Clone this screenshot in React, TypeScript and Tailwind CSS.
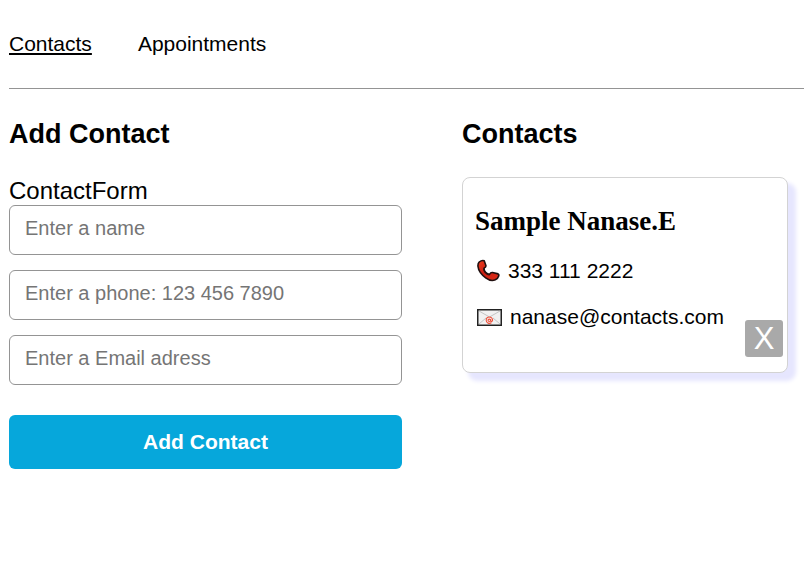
const inputs = ["Enter a name", "Enter a phone: 123 456 7890", "Enter a Email adress"];

function Phone() {
  return (
    <svg className="h-6 w-6 shrink-0" viewBox="0 0 24 24">
      <defs>
        <linearGradient id="handset" x1="0" y1="0" x2="1" y2="1">
          <stop offset="0" stopColor="#ee3d1e" />
          <stop offset=".45" stopColor="#c91e12" />
          <stop offset="1" stopColor="#e02e18" />
        </linearGradient>
      </defs>
      <path
        d="M3.200 3C4.700 1.800 6.800 1.200 8.200 1.800L9.900 6.600c.2 1.200-.4 1.900-1.700 2.400-.4 1.500.2 3 1.400 4.200 1.200 1.300 2.500 2 3.900 2.100.8-1.400 1.700-2 3-1.800l5.600 1.400c.8.300.9 1 .6 2-.5 1.700-1.700 3.100-3.400 3.900-2.800 1.200-6.400.5-9.600-1.900C5.900 16 2.400 11.800 2 7.500 1.800 5.700 2.200 4 3.200 3Z"
        fill="url(#handset)"
        stroke="#201010"
        strokeWidth="1.600"
        strokeLinejoin="round"
      />
      <path d="M7.800 9.500c-.2 3.500 2.300 6.300 5.800 6.600" fill="none" stroke="#201010" strokeWidth="1" />
    </svg>
  );
}

function Mail() {
  return (
    <svg className="h-[17px] w-[25px] shrink-0" viewBox="0 0 25 17">
      <rect x=".75" y=".75" width="23.500" height="15.500" fill="#f1f1f1" stroke="#222" strokeWidth="1.500" />
      <path d="M2 2l10.500 6L23 2M2 15l7-6M23 15l-7-6" fill="none" stroke="#c4c4c4" />
      <ellipse cx="12.300" cy="11.300" rx="1.300" ry="1.200" fill="none" stroke="#ee513b" strokeWidth="1.100" />
      <path d="M13.700 9.900v2c.2 1.200 1.900.8 1.900-.8 0-4.100-6.400-4.100-6.400.1 0 3.200 3.200 3.700 5.200 2.600" fill="none" stroke="#ee513b" strokeWidth="1.100" />
    </svg>
  );
}

export default function App() {
  return (
    <div className="h-[563px] overflow-hidden bg-white pl-[9px] font-['Liberation_Sans',Arial,sans-serif] text-black">
      <nav className="flex h-[89px] gap-[46px] border-b border-[#949494] pt-8 text-[21px] leading-6">
        <a className="underline decoration-2 underline-offset-2">Contacts</a>
        <a>Appointments</a>
      </nav>
      <main className="flex gap-[60px] pt-[29px]">
        <section className="w-[393px]">
          <h2 className="text-[27px] leading-8 font-bold">Add Contact</h2>
          <form className="pt-[27px]">
            <p className="h-7 text-[24px] leading-7">ContactForm</p>
            <div className="flex flex-col gap-[15px]">
              {inputs.map((label) => (
                <input
                  key={label}
                  placeholder={label}
                  className="h-[50px] w-full rounded-[6px] border border-[#949494] px-[15px] pb-[4px] text-[20px] placeholder:text-[#757575]"
                />
              ))}
            </div>
            <button className="mt-[30px] h-[54px] w-full rounded-[6px] bg-[#06a7db] text-[21px] font-bold text-white">
              Add Contact
            </button>
          </form>
        </section>
        <section className="w-[326px]">
          <h2 className="text-[27px] leading-8 font-bold">Contacts</h2>
          <article className="relative mt-[27px] h-[196px] rounded-[8px] border border-[#d3d3d3] bg-white pt-[27px] pl-3 shadow-[7px_7px_4px_1px_#e6e6fe]">
            <h3 className="font-['Liberation_Serif',serif] text-[27px] leading-8 font-bold">Sample Nanase.E</h3>
            <div className="mt-[22px] flex h-6 items-center gap-2 pl-px text-[21px] leading-6"><Phone />333 111 2222</div>
            <div className="mt-[22px] flex h-6 items-center gap-2 pl-[2px] text-[21px] leading-6"><Mail />nanase@contacts.com</div>
            <button className="absolute right-1 bottom-[15px] h-[37px] w-[38px] rounded-[3px] bg-[#a9a9a9] text-[31px] leading-[35px] text-white">X</button>
          </article>
        </section>
      </main>
    </div>
  );
}
